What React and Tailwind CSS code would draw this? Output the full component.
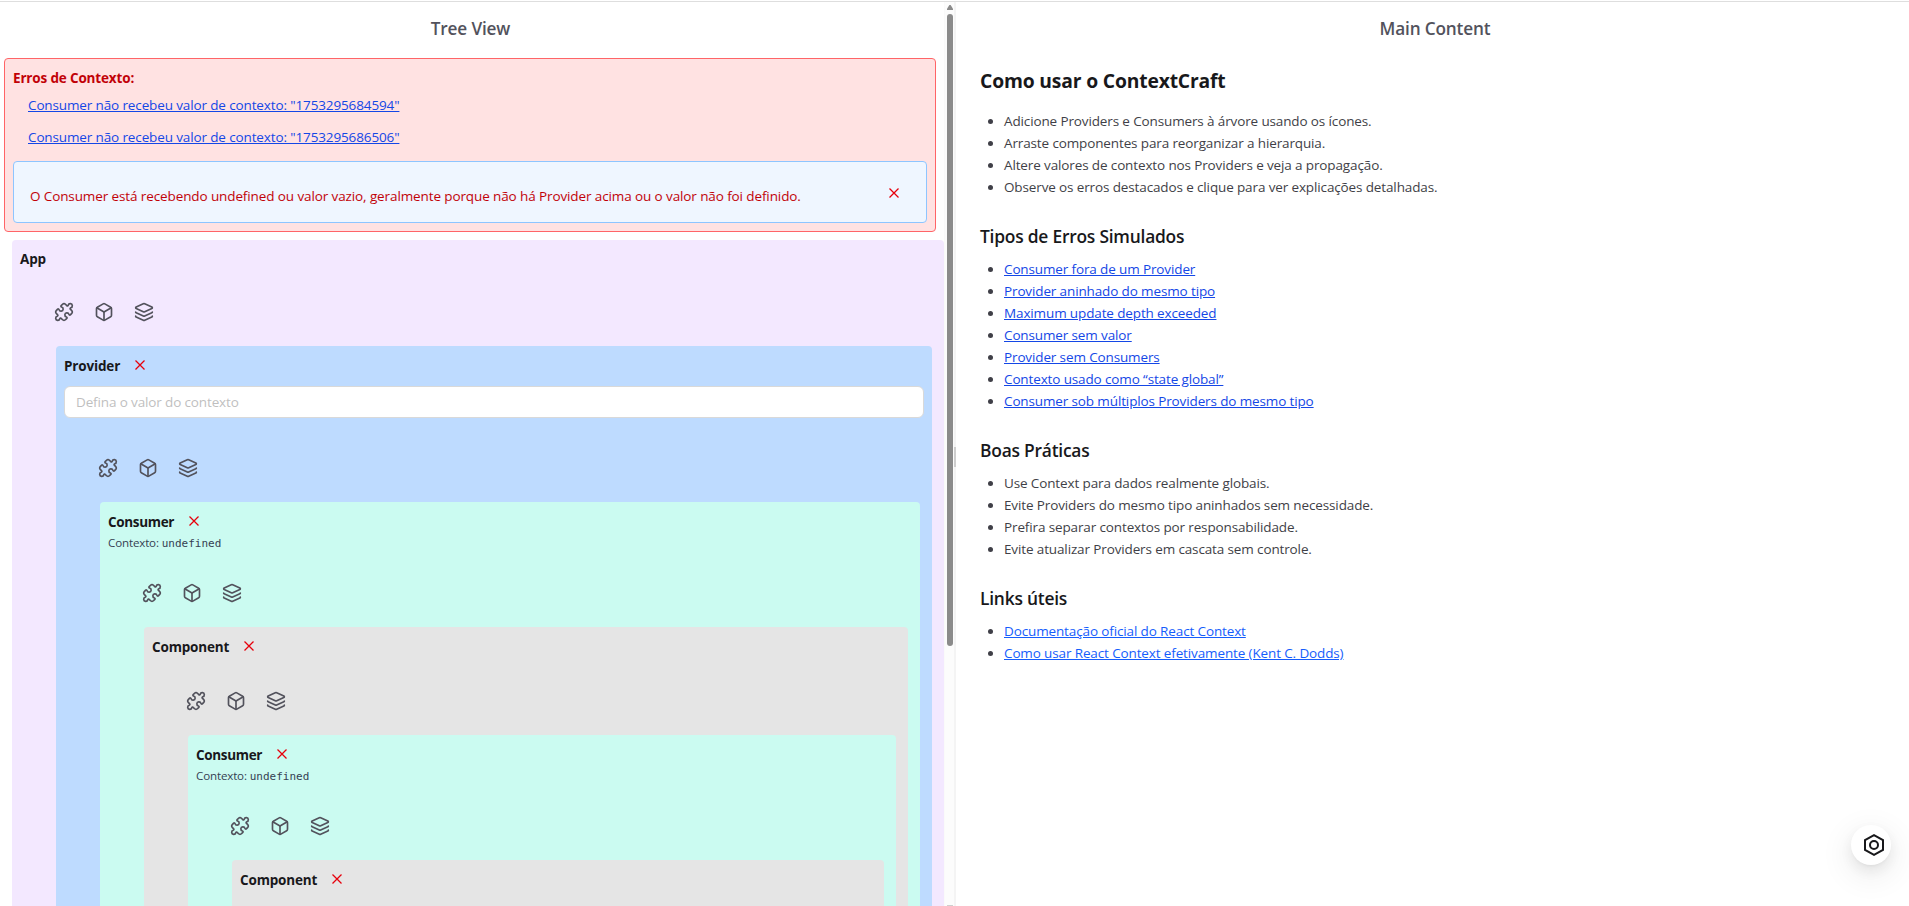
import { Box, Layers, Puzzle } from "lucide-react";

function CloseIcon() {
  return (
    <svg className="size-2.5 text-red-600" viewBox="0 0 10 10" fill="none" stroke="currentColor" strokeWidth="1.3">
      <path d="M0.5 0.5 9.5 9.5M9.5 0.5 0.5 9.5" />
    </svg>
  );
}

function NodeActions() {
  return (
    <div className="mt-8 ml-[34px] flex gap-5 text-zinc-600">
      <Puzzle size={20} />
      <Box size={20} />
      <Layers size={20} />
    </div>
  );
}

function TreeNode({ title, color, removable = true, root = false, context = false, input = false, children }) {
  return (
    <div className={`rounded-t ${color} ${root ? "ml-2" : "mt-6 mr-1 ml-9"} pt-2 pl-2`}>
      <div className={`flex items-center gap-[15px] ${removable ? "h-6" : "h-[22px]"}`}>
        <span className={`text-[13.5px] leading-[22px] font-bold ${context ? "tracking-[-0.025em]" : ""}`}>{title}</span>
        {removable && (
          <button type="button" aria-label="Remover" className="-mt-0.5">
            <CloseIcon />
          </button>
        )}
      </div>
      {context && (
        <p className="h-[17px] text-[11.6px] leading-[17px] whitespace-nowrap text-gray-700">
          Contexto:{" "}
          <span className="font-['DejaVu_Sans_Mono',monospace] text-[11px] leading-none tracking-normal">undefined</span>
        </p>
      )}
      {input && (
        <div className="py-2 pr-2">
          <input
            placeholder="Defina o valor do contexto"
            className="block h-8 w-full rounded-md border border-[#d9d9d9] bg-white px-[11px] text-[13.5px] tracking-[-0.01em] placeholder:text-[#bfbfbf]"
          />
        </div>
      )}
      <div className="pr-2">
        <NodeActions />
        {children}
      </div>
    </div>
  );
}

const usage = [
  "Adicione Providers e Consumers à árvore usando os ícones.",
  "Arraste componentes para reorganizar a hierarquia.",
  "Altere valores de contexto nos Providers e veja a propagação.",
  "Observe os erros destacados e clique para ver explicações detalhadas.",
];
const errorTypes = [
  "Consumer fora de um Provider",
  "Provider aninhado do mesmo tipo",
  "Maximum update depth exceeded",
  "Consumer sem valor",
  "Provider sem Consumers",
  "Contexto usado como “state global”",
  "Consumer sob múltiplos Providers do mesmo tipo",
];
const practices = [
  "Use Context para dados realmente globais.",
  "Evite Providers do mesmo tipo aninhados sem necessidade.",
  "Prefira separar contextos por responsabilidade.",
  "Evite atualizar Providers em cascata sem controle.",
];
const links = ["Documentação oficial do React Context", "Como usar React Context efetivamente (Kent C. Dodds)"];

function Section({ title, items, linkClass }) {
  return (
    <section className="mb-6">
      <h3 className="mb-2 text-[17.4px] leading-7 font-semibold tracking-[-0.013em]">{title}</h3>
      <List items={items} linkClass={linkClass} />
    </section>
  );
}

function List({ items, linkClass }) {
  return (
    <ul className="list-disc pl-6 text-[13.5px] leading-[22px] tracking-[-0.0095em] text-zinc-700">
      {items.map((item) => (
        <li key={item}>{linkClass ? <a className={`underline ${linkClass}`}>{item}</a> : item}</li>
      ))}
    </ul>
  );
}

export default function App() {
  return (
    <div className="flex h-[906px] w-full flex-col overflow-hidden bg-white pt-px font-['Open_Sans','Noto_Sans',sans-serif] tracking-[-0.01em] text-zinc-900">
      <div className="h-px shrink-0 bg-[#dedede]" />
      <div className="flex min-h-0 flex-1">
        <div className="w-[944px] shrink-0 overflow-hidden">
          <h2 className="mr-[3px] flex h-14 items-center justify-center pb-0.5 text-[17.2px] font-semibold text-zinc-600">Tree View</h2>
          <div className="mr-2 ml-1 h-[174px] rounded border border-red-400 bg-red-100 px-2 pt-2 text-[13.5px] leading-[22px] text-red-700">
            <div className="font-bold">Erros de Contexto:</div>
            <div className="flex flex-col items-start tracking-[-0.0095em] text-blue-700">
              <button type="button" className="h-8 px-[15px] underline">
                Consumer não recebeu valor de contexto: "1753295684594"
              </button>
              <button type="button" className="h-8 px-[15px] underline">
                Consumer não recebeu valor de contexto: "1753295686506"
              </button>
            </div>
            <div className="mt-2 flex h-[62px] items-center justify-between rounded border border-blue-300 bg-blue-50 pr-[27px] pl-4">
              <p className="pt-2 tracking-[-0.008em]">
                O Consumer está recebendo undefined ou valor vazio, geralmente porque não há Provider acima ou o valor não foi definido.
              </p>
              <button type="button" aria-label="Fechar" className="pt-0.5">
                <CloseIcon />
              </button>
            </div>
          </div>
          <div className="pt-2 pl-1">
            <TreeNode title="App" color="bg-purple-100" removable={false} root>
              <TreeNode title="Provider" color="bg-blue-200" input>
                <TreeNode title="Consumer" color="bg-teal-100" context>
                  <TreeNode title="Component" color="bg-neutral-200">
                    <TreeNode title="Consumer" color="bg-teal-100" context>
                      <TreeNode title="Component" color="bg-neutral-200" />
                    </TreeNode>
                  </TreeNode>
                </TreeNode>
              </TreeNode>
            </TreeNode>
          </div>
        </div>
        <div className="flex w-2.5 shrink-0 flex-col items-center border-l border-[#fafafa] bg-[#fcfcfc] pl-px">
          <svg className="mt-[3px] h-[5px] w-1.5 shrink-0 text-[#8b8b8b]" viewBox="0 0 6 5" fill="currentColor">
            <path d="M2.4 0h1.2L6 3.8V5H0V3.8z" />
          </svg>
          <div className="mt-1 h-[632px] w-1.5 shrink-0 rounded-full bg-[#8b8b8b]" />
          <div className="mt-auto h-px w-1.5 bg-[#cfcfcf]" />
        </div>
        <div className="flex w-0.5 shrink-0 flex-col bg-[#f4f4f4] pt-[445px]">
          <div className="h-5 bg-[#cecece]" />
        </div>
        <main className="flex-1">
          <h2 className="ml-[5px] flex h-14 items-center justify-center pb-0.5 text-[17.2px] font-semibold text-zinc-600">
            Main Content
          </h2>
          <div className="px-6 pt-[9px]">
            <h1 className="mb-[15px] text-[19.3px] leading-7 font-bold">Como usar o ContextCraft</h1>
            <div className="mb-6">
              <List items={usage} />
            </div>
            <Section title="Tipos de Erros Simulados" items={errorTypes} linkClass="text-blue-700" />
            <Section title="Boas Práticas" items={practices} />
            <Section title="Links úteis" items={links} linkClass="text-blue-600" />
          </div>
        </main>
      </div>
      <button
        type="button"
        aria-label="Configurações"
        className="fixed right-[18px] bottom-[41px] flex size-10 items-center justify-center rounded-full bg-white pl-1.5 shadow-[0_6px_16px_0_rgba(0,0,0,0.08),0_3px_6px_-4px_rgba(0,0,0,0.12),0_9px_28px_8px_rgba(0,0,0,0.05)]"
      >
        <svg className="size-6 shrink-0" viewBox="0 0 24 24" fill="none" stroke="currentColor" strokeWidth="2">
          <path d="M12 2.1 21 7v10l-9 4.9L3 17V7z" />
          <circle cx="12" cy="12" r="4" />
        </svg>
      </button>
    </div>
  );
}
